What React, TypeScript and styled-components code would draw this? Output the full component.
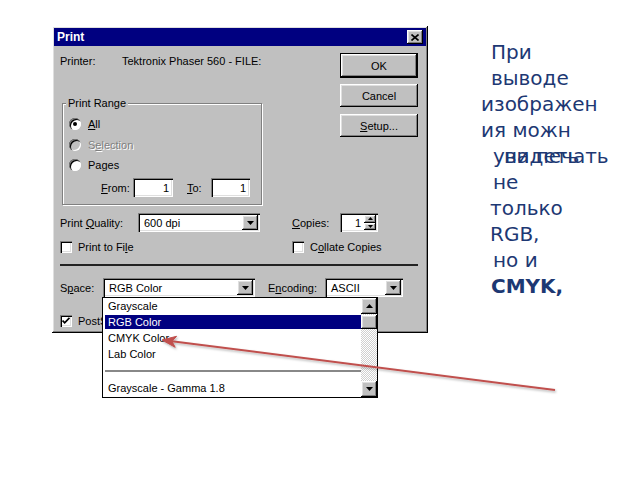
import React from 'react';
import styled, { createGlobalStyle, css } from 'styled-components';

const GlobalStyle = createGlobalStyle`
  body {
    margin: 0;
    background: #fff;
    font-family: "Liberation Sans", Arial, sans-serif;
  }
`;

const raised = css`
  box-shadow: inset -1px -1px #000, inset 1px 1px #fff,
    inset -2px -2px #808080, inset 2px 2px #dfdfdf;
`;

const sunken = css`
  box-shadow: inset 1px 1px #808080, inset 2px 2px #000,
    inset -1px -1px #fff, inset -2px -2px #dfdfdf;
`;

const Slide = styled.div`
  position: relative;
  width: 640px;
  height: 480px;
  box-sizing: border-box;
  padding: 26px 0 0 52px;
  display: flex;
  align-items: flex-start;
  overflow: hidden;
  background: #fff;
`;

const Dialog = styled.div`
  width: 376px;
  height: 307px;
  box-sizing: border-box;
  padding: 2px;
  background: #c0c0c0;
  display: flex;
  flex-direction: column;
  font-size: 11px;
  color: #000;
  ${raised}
`;

const TitleBar = styled.div`
  height: 18px;
  flex: none;
  background: #000080;
  color: #fff;
  display: flex;
  align-items: center;
  justify-content: space-between;
  padding: 0 3px 0 3px;
  font-weight: bold;
  font-size: 12px;
`;

const CloseButton = styled.div`
  width: 16px;
  height: 14px;
  background: #c0c0c0;
  display: flex;
  align-items: center;
  justify-content: center;
  ${raised}
`;

const Body = styled.div`
  flex: 1;
  display: flex;
  flex-direction: column;
  padding: 7px 8px 0 6px;
`;

const TopGrid = styled.div`
  display: grid;
  grid-template-columns: 1fr 78px;
`;

const LeftCol = styled.div`
  display: flex;
  flex-direction: column;
`;

const PrinterRow = styled.div`
  height: 16px;
  display: flex;
  align-items: center;
`;

const PrinterLabel = styled.span`
  width: 62px;
`;

const Group = styled.div`
  margin: 34px 0 0 2px;
  width: 200px;
  height: 102px;
  box-sizing: border-box;
  border: 1px solid #808080;
  box-shadow: 1px 1px 0 #fff, inset 1px 1px 0 #fff;
  padding: 0 0 0 6px;
  display: flex;
  flex-direction: column;
`;

const Legend = styled.div`
  align-self: flex-start;
  margin: -8px 0 0 -3px;
  padding: 0 2px;
  line-height: 14px;
  background: #c0c0c0;
`;

const RadioRow = styled.div<{ $first?: boolean }>`
  height: 20.5px;
  margin-top: ${p => (p.$first ? '4px' : '0')};
  display: flex;
  align-items: center;
  gap: 7px;
`;

const RadioCircle = styled.span<{ $checked?: boolean; $disabled?: boolean }>`
  position: relative;
  width: 12px;
  height: 12px;
  border-radius: 50%;
  background: ${p => (p.$disabled ? '#c0c0c0' : '#fff')};
  box-shadow: inset 1px 1px #808080, inset 2px 2px #000, inset -1px -1px #fff;
  ${p =>
    p.$checked &&
    css`
      &::after {
        content: '';
        position: absolute;
        left: 4px;
        top: 4px;
        width: 4px;
        height: 4px;
        border-radius: 50%;
        background: #000;
      }
    `}
`;

const OptionText = styled.span<{ $disabled?: boolean }>`
  color: ${p => (p.$disabled ? '#808080' : '#000')};
  text-shadow: ${p => (p.$disabled ? '1px 1px 0 #fff' : 'none')};
`;

const RangeRow = styled.div`
  margin-top: 2.5px;
  height: 19px;
  display: flex;
  align-items: center;
  padding-left: 32px;
`;

const FieldLabel = styled.span<{ $w: number }>`
  width: ${p => p.$w}px;
  flex: none;
  white-space: nowrap;
`;

const Field = styled.div<{ $w: number; $right?: boolean }>`
  width: ${p => p.$w}px;
  height: 19px;
  flex: none;
  box-sizing: border-box;
  background: #fff;
  display: flex;
  align-items: center;
  justify-content: ${p => (p.$right ? 'flex-end' : 'flex-start')};
  padding: 0 ${p => (p.$right ? '4px' : '2px')} 0 4px;
  ${sunken}
`;

const ButtonCol = styled.div`
  display: flex;
  flex-direction: column;
`;

const Button = styled.div<{ $default?: boolean; $gap?: number }>`
  height: ${p => (p.$default ? '25px' : '23px')};
  margin-top: ${p => p.$gap ?? 0}px;
  box-sizing: border-box;
  background: #c0c0c0;
  display: flex;
  align-items: center;
  justify-content: center;
  ${raised}
  ${p =>
    p.$default &&
    css`
      border: 1px solid #000;
    `}
`;

const DialogRow = styled.div<{ $top: number; $h: number }>`
  margin-top: ${p => p.$top}px;
  height: ${p => p.$h}px;
  display: flex;
  align-items: center;
`;

const Cell = styled.div<{ $w?: number }>`
  display: flex;
  align-items: center;
  width: ${p => (p.$w ? `${p.$w}px` : 'auto')};
  flex: none;
`;

const Select = styled.div<{ $w: number }>`
  position: relative;
  width: ${p => p.$w}px;
  height: 19px;
  flex: none;
  box-sizing: border-box;
  background: #fff;
  display: flex;
  align-items: center;
  justify-content: space-between;
  padding: 2px 2px 2px 6px;
  ${sunken}
`;

const DropButton = styled.div`
  width: 16px;
  height: 15px;
  background: #c0c0c0;
  display: flex;
  align-items: center;
  justify-content: center;
  ${raised}
`;

const SpinButtons = styled.div`
  width: 12px;
  height: 15px;
  display: flex;
  flex-direction: column;
  margin-left: 2px;
`;

const SpinHalf = styled.div`
  flex: 1;
  background: #c0c0c0;
  display: flex;
  align-items: center;
  justify-content: center;
  ${raised}
`;

const CheckRow = styled.div`
  display: flex;
  align-items: center;
  gap: 6px;
`;

const CheckBox = styled.span`
  width: 12px;
  height: 12px;
  flex: none;
  background: #fff;
  display: flex;
  align-items: center;
  justify-content: center;
  ${sunken}
`;

const Separator = styled.div`
  margin-top: 11px;
  height: 2px;
  background: #222;
`;

const DropList = styled.div`
  position: absolute;
  left: -1px;
  top: 100%;
  width: 276px;
  height: 101px;
  box-sizing: border-box;
  background: #fff;
  border: 1px solid #000;
  display: flex;
  z-index: 2;
`;

const ListItems = styled.div`
  flex: 1;
  display: flex;
  flex-direction: column;
  padding-left: 2px;
`;

const ListItem = styled.div<{ $selected?: boolean }>`
  height: 16px;
  display: flex;
  align-items: center;
  padding-left: 3px;
  color: ${p => (p.$selected ? '#fff' : '#000')};
  background: ${p => (p.$selected ? '#000080' : 'transparent')};
  background-clip: content-box;
  box-sizing: border-box;
  ${p =>
    p.$selected &&
    css`
      padding: 1px 0 1px 0;
      & > span {
        padding-left: 3px;
      }
    `}
`;

const ListSeparator = styled.div`
  height: 18px;
  display: flex;
  align-items: center;

  &::after {
    content: '';
    flex: 1;
    height: 2px;
    background: #888;
  }
`;

const ScrollBar = styled.div`
  width: 16px;
  display: flex;
  flex-direction: column;
  background-color: #e6e6e6;
  background-image: repeating-conic-gradient(#fff 0 25%, #d0d0d0 0 50%);
  background-size: 2px 2px;
`;

const ScrollArrow = styled.div`
  height: 16px;
  background: #c0c0c0;
  display: flex;
  align-items: center;
  justify-content: center;
  ${raised}
`;

const ScrollThumb = styled.div`
  height: 14px;
  margin-top: 1px;
  background: #c0c0c0;
  ${raised}
`;

const ScrollTrack = styled.div`
  flex: 1;
`;

const TextBlock = styled.div`
  margin: 13px 0 0 53px;
  font-family: "DejaVu Sans", Verdana, sans-serif;
  font-size: 20px;
  line-height: 26px;
  color: #1d3873;
`;

const Line = styled.div<{ $indent: number; $bold?: boolean }>`
  padding-left: ${p => p.$indent}px;
  white-space: nowrap;
  font-weight: ${p => (p.$bold ? 'bold' : 'normal')};
`;

const OverlapLine = styled.div`
  display: grid;
  white-space: nowrap;

  & > span {
    grid-area: 1 / 1;
  }
`;

const OverlapWord = styled.span<{ $indent: number }>`
  padding-left: ${p => p.$indent}px;
`;

const ArrowLayer = styled.svg`
  position: absolute;
  left: 0;
  top: 0;
  pointer-events: none;
  z-index: 3;
`;

const DownTriangle = () => (
  <svg width="7" height="4" viewBox="0 0 7 4">
    <path d="M0 0h7L3.5 4z" fill="#000" />
  </svg>
);

const UpTriangle = ({ w = 7, h = 4 }: { w?: number; h?: number }) => (
  <svg width={w} height={h} viewBox="0 0 7 4">
    <path d="M0 4h7L3.5 0z" fill="#000" />
  </svg>
);

const Check = () => (
  <svg width="8" height="8" viewBox="0 0 8 8">
    <path d="M0.5 3.5l2.2 2.3L7.5 0.8" stroke="#000" strokeWidth="1.8" fill="none" />
  </svg>
);

const Radio = ({ checked, disabled, children }: { checked?: boolean; disabled?: boolean; children: React.ReactNode }) => (
  <>
    <RadioCircle $checked={checked} $disabled={disabled} />
    <OptionText $disabled={disabled}>{children}</OptionText>
  </>
);

const SelectBox = ({ w, value, children }: { w: number; value: string; children?: React.ReactNode }) => (
  <Select $w={w}>
    <span>{value}</span>
    <DropButton>
      <DownTriangle />
    </DropButton>
    {children}
  </Select>
);

const spaces = ['Grayscale', 'RGB Color', 'CMYK Color', 'Lab Color'];

const App = () => {
  return (
    <>
      <GlobalStyle />
      <Slide>
        <Dialog>
          <TitleBar>
            <span>Print</span>
            <CloseButton>
              <svg width="8" height="7" viewBox="0 0 8 7">
                <path d="M0.5 0.5l7 6M7.5 0.5l-7 6" stroke="#000" strokeWidth="1.6" />
              </svg>
            </CloseButton>
          </TitleBar>
          <Body>
            <TopGrid>
              <LeftCol>
                <PrinterRow>
                  <PrinterLabel>Printer:</PrinterLabel>
                  <span>Tektronix Phaser 560 - FILE:</span>
                </PrinterRow>
                <Group>
                  <Legend>Print Range</Legend>
                  <RadioRow $first>
                    <Radio checked>
                      <u>A</u>ll
                    </Radio>
                  </RadioRow>
                  <RadioRow>
                    <Radio disabled>
                      S<u>e</u>lection
                    </Radio>
                  </RadioRow>
                  <RadioRow>
                    <Radio>Pages</Radio>
                  </RadioRow>
                  <RangeRow>
                    <FieldLabel $w={32}>
                      <u>F</u>rom:
                    </FieldLabel>
                    <Field $w={40} $right>1</Field>
                    <FieldLabel $w={24} style={{ marginLeft: 14 }}>
                      <u>T</u>o:
                    </FieldLabel>
                    <Field $w={39} $right>1</Field>
                  </RangeRow>
                </Group>
              </LeftCol>
              <ButtonCol>
                <Button $default>OK</Button>
                <Button $gap={6}>Cancel</Button>
                <Button $gap={7}>
                  <span>
                    <u>S</u>etup...
                  </span>
                </Button>
              </ButtonCol>
            </TopGrid>

            <DialogRow $top={8} $h={19}>
              <Cell $w={232}>
                <FieldLabel $w={78}>
                  Print <u>Q</u>uality:
                </FieldLabel>
                <SelectBox w={122} value="600 dpi" />
              </Cell>
              <Cell>
                <FieldLabel $w={48}>
                  <u>C</u>opies:
                </FieldLabel>
                <Field $w={38} $right style={{ padding: '2px' }}>
                  <span style={{ marginRight: 1 }}>1</span>
                  <SpinButtons>
                    <SpinHalf>
                      <UpTriangle w={5} h={3} />
                    </SpinHalf>
                    <SpinHalf>
                      <svg width="5" height="3" viewBox="0 0 7 4">
                        <path d="M0 0h7L3.5 4z" fill="#000" />
                      </svg>
                    </SpinHalf>
                  </SpinButtons>
                </Field>
              </Cell>
            </DialogRow>

            <DialogRow $top={8} $h={13}>
              <Cell $w={232}>
                <CheckRow>
                  <CheckBox />
                  <span>
                    Print to Fi<u>l</u>e
                  </span>
                </CheckRow>
              </Cell>
              <Cell>
                <CheckRow>
                  <CheckBox />
                  <span>
                    C<u>o</u>llate Copies
                  </span>
                </CheckRow>
              </Cell>
            </DialogRow>

            <Separator />

            <DialogRow $top={12} $h={19}>
              <FieldLabel $w={43}>
                S<u>p</u>ace:
              </FieldLabel>
              <SelectBox w={152} value="RGB Color">
                <DropList>
                  <ListItems>
                    {spaces.map(s => (
                      <ListItem key={s} $selected={s === 'RGB Color'}>
                        <span>{s}</span>
                      </ListItem>
                    ))}
                    <ListSeparator />
                    <ListItem>Grayscale - Gamma 1.8</ListItem>
                  </ListItems>
                  <ScrollBar>
                    <ScrollArrow>
                      <UpTriangle />
                    </ScrollArrow>
                    <ScrollThumb />
                    <ScrollTrack />
                    <ScrollArrow>
                      <DownTriangle />
                    </ScrollArrow>
                  </ScrollBar>
                </DropList>
              </SelectBox>
              <FieldLabel $w={57} style={{ marginLeft: 13 }}>
                E<u>n</u>coding:
              </FieldLabel>
              <SelectBox w={78} value="ASCII" />
            </DialogRow>

            <DialogRow $top={18} $h={12}>
              <CheckRow>
                <CheckBox>
                  <Check />
                </CheckBox>
                <span>PostScript</span>
              </CheckRow>
            </DialogRow>
          </Body>
        </Dialog>

        <TextBlock>
          <Line $indent={10}>При</Line>
          <Line $indent={10}>выводе</Line>
          <Line $indent={0}>изображен</Line>
          <Line $indent={0}>ия можн</Line>
          <OverlapLine>
            <OverlapWord $indent={12}>увидеть</OverlapWord>
            <OverlapWord $indent={23}>на печать</OverlapWord>
          </OverlapLine>
          <Line $indent={12}>не</Line>
          <Line $indent={9}>только</Line>
          <Line $indent={9}>RGB,</Line>
          <Line $indent={12}>но и</Line>
          <Line $indent={10} $bold>
            CMYK,
          </Line>
        </TextBlock>

        <ArrowLayer width="640" height="480" viewBox="0 0 640 480">
          <defs>
            <filter id="arrowShadow" x="-5%" y="-50%" width="110%" height="200%">
              <feDropShadow dx="1" dy="1.5" stdDeviation="1" floodColor="#000" floodOpacity="0.3" />
            </filter>
          </defs>
          <g filter="url(#arrowShadow)" fill="#c0504d" stroke="#c0504d">
            <line x1="555" y1="390" x2="172" y2="341.3" strokeWidth="2" />
            <polygon points="162,340 176.6,336.3 171.9,341.3 175.2,347.3" strokeWidth="1" strokeLinejoin="round" />
          </g>
        </ArrowLayer>
      </Slide>
    </>
  );
};

export default App;
